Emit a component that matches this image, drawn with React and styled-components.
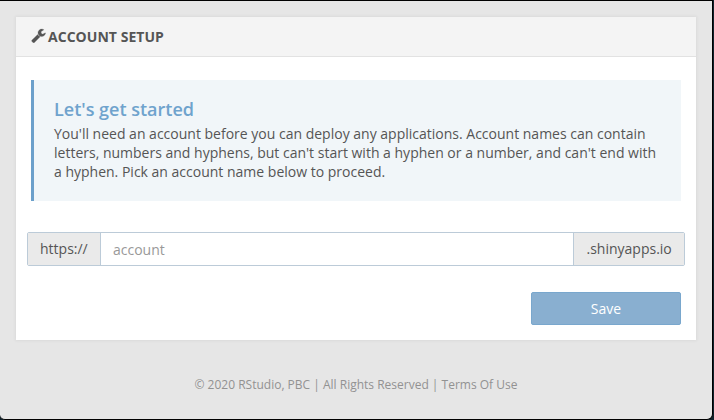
import React from "react";
import styled, { createGlobalStyle } from "styled-components";

const GlobalStyle = createGlobalStyle`
  *, *::before, *::after { box-sizing: border-box; }
  html, body { margin: 0; padding: 0; background: #10222c; overflow: hidden; }
  body, input, button { font-family: "Open Sans", "Noto Sans", sans-serif; }
`;

const Desktop = styled.div`
  width: 714px;
  height: 420px;
  background: #10222c;
`;

const Window = styled.div`
  width: 713px;
  height: 420px;
  padding: 16px 16px 0;
  border: solid #000;
  border-width: 1px 1px 1px 0;
  border-radius: 0 0 6px 5px;
  background: #e6e6e6;
  color: #555;
  font-size: 14px;
`;

const Card = styled.section`
  width: 680px;
  height: 323px;
  background: #fff;
  box-shadow: 0 0 3px 1px rgba(0, 0, 0, 0.05);
`;

const CardHeader = styled.header`
  display: flex;
  align-items: center;
  height: 40px;
  padding: 0 15px;
  background: #f4f4f4;
  border-bottom: 1px solid #e2e2e2;
`;

const WrenchIcon = styled.svg`
  width: 15px;
  height: 15px;
  margin: -2px 2px 0 0;
  fill: #555;
  stroke: #555;
  stroke-width: 30;
`;

const CardTitle = styled.h1`
  margin: 0;
  font-size: 14px;
  font-weight: 700;
  line-height: 20px;
  letter-spacing: 0.04px;
  color: #555;
`;

const Callout = styled.div`
  height: 121px;
  margin: 23px 15px 0;
  padding: 19px 20px 0;
  border-left: 3px solid #6ca0cb;
  background: #f1f6f9;
`;

const CalloutTitle = styled.h2`
  margin: 0 0 5px;
  font-size: 18px;
  font-weight: 560;
  line-height: 20px;
  color: #6fa3cd;
`;

const CalloutText = styled.p`
  margin: 0;
  line-height: 19px;
  white-space: nowrap;
`;

const InputGroup = styled.div`
  display: flex;
  height: 34px;
  margin: 31px 11px 0;
  border: 1px solid #bccbd8;
  border-radius: 2px;
  overflow: hidden;
`;

const Addon = styled.span`
  flex: none;
  width: ${({ $width }) => $width}px;
  padding-left: ${({ $inset = 12 }) => $inset}px;
  line-height: 32px;
  background: #eaeaea;
`;

const AccountInput = styled.input`
  flex: 1;
  min-width: 0;
  padding: 1px 12px;
  border: solid #bccbd8;
  border-width: 0 1px;
  outline: 0;
  background: #fff;
  font-size: 14px;
  color: #555;
  &::placeholder { color: #999; opacity: 1; }
`;

const SaveButton = styled.button`
  display: block;
  width: 150px;
  height: 33px;
  margin: 26px 15px 0 auto;
  padding: 0;
  border: 1px solid #79a7cd;
  border-radius: 2px;
  background: #89afd0;
  color: #fff;
  font-size: 14px;
`;

const Footer = styled.footer`
  margin: 35px 0 0 178.5px;
  font-size: 12px;
  line-height: 20px;
  white-space: nowrap;
  color: #929292;
`;

export default function App() {
  return (
    <Desktop>
      <GlobalStyle />
      <Window>
        <Card>
          <CardHeader>
            <WrenchIcon viewBox="0 0 1792 1792" aria-hidden="true">
              <path d="M1092 1052l-682 682q-37 37-90 37-52 0-91-37l-106-108q-38-36-38-90 0-53 38-91l681-681q39 98 114.500 173.500t173.500 114.500zm634-435q0 39-23 106-47 134-164.500 217.500t-258.500 83.500q-185 0-316.500-131.500t-131.500-316.500 131.500-316.500 316.500-131.500q58 0 121.500 16.500t107.500 46.500q16 11 16 28t-16 28l-293 169v224l193 107q5-3 79-48.500t135.500-81 70.500-35.500q15 0 23.500 10t8.500 25z" />
            </WrenchIcon>
            <CardTitle>ACCOUNT SETUP</CardTitle>
          </CardHeader>
          <Callout>
            <CalloutTitle>Let's get started</CalloutTitle>
            <CalloutText>
              You'll need an account before you can deploy any applications. Account names can contain
              <br />
              letters, numbers and hyphens, but can't start with a hyphen or a number, and can't end with
              <br />
              a hyphen. Pick an account name below to proceed.
            </CalloutText>
          </Callout>
          <InputGroup>
            <Addon $width={72}>https://</Addon>
            <AccountInput placeholder="account" aria-label="Account name" />
            <Addon $width={110} $inset={12.5}>.shinyapps.io</Addon>
          </InputGroup>
          <SaveButton type="button">Save</SaveButton>
        </Card>
        <Footer>© 2020 RStudio, PBC | All Rights Reserved | Terms Of Use</Footer>
      </Window>
    </Desktop>
  );
}
